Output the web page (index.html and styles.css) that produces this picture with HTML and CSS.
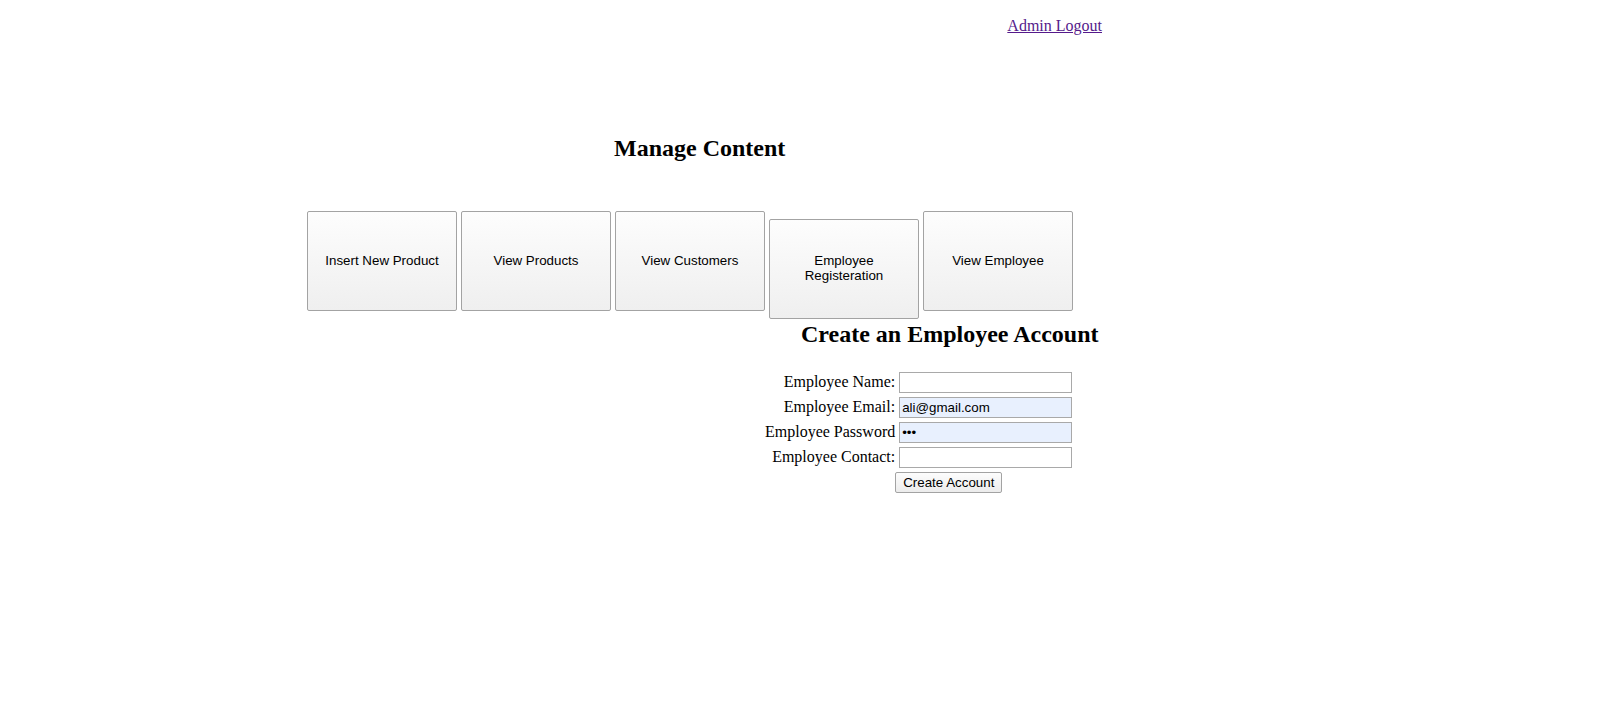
FILE: index.html
```html
<!DOCTYPE html>
<html>
<head>
<meta charset="utf-8">
<title>Admin Panel</title>
<link rel="stylesheet" href="styles.css">
</head>
<body>
<div class="wrap">
  <div class="top"><a href="#" class="logout">Admin Logout</a></div>
  <h2 class="manage">Manage Content</h2>
  <div class="menu">
    <button class="tile">Insert New Product</button>
    <button class="tile">View Products</button>
    <button class="tile">View Customers</button>
    <button class="tile">Employee<br>Registeration</button>
    <button class="tile">View Employee</button>
  </div>
  <h2 class="create">Create an Employee Account</h2>
  <form class="form">
    <table class="ftable">
      <tr><td class="lbl">Employee Name:</td><td><input class="field" type="text"></td></tr>
      <tr><td class="lbl">Employee Email:</td><td><input class="field filled" type="text" value="ali@gmail.com"></td></tr>
      <tr><td class="lbl">Employee Password</td><td><input class="field filled" type="password" value="abc"></td></tr>
      <tr><td class="lbl">Employee Contact:</td><td><input class="field" type="text"></td></tr>
      <tr><td></td><td><button type="button" class="submit">Create Account</button></td></tr>
    </table>
  </form>
</div>
</body>
</html>
```
FILE: styles.css
```css
html, body {
  margin: 0;
  padding: 0;
  background: #fff;
}
body {
  font-family: "Liberation Serif", "Times New Roman", serif;
  font-size: 16px;
  color: #000;
}
.wrap {
  margin-left: 307px;
  width: 795px;
}
.top {
  padding-top: 17px;
  text-align: right;
  line-height: normal;
}
.logout {
  color: #551a8b;
  text-decoration: underline;
}
.manage {
  font-size: 24px;
  font-weight: bold;
  margin: 100px 0 0 0;
  padding-left: 307px;
}
.menu {
  display: flex;
  align-items: baseline;
  gap: 4px;
  margin-top: 49px;
}
.tile {
  width: 150px;
  height: 100px;
  padding: 0 4px 1px;
  border: 1px solid #a3a3a3;
  border-radius: 2px;
  background: linear-gradient(#fdfdfd, #efefef);
  font-family: "Liberation Sans", Arial, sans-serif;
  font-size: 13.333px;
  color: #000;
  text-align: center;
}
.create {
  font-size: 24px;
  font-weight: bold;
  margin: 2px 0 0 0;
  padding-left: 494px;
}
.form {
  margin: 21px 0 0 0;
}
.ftable {
  margin-left: 455px;
  border-spacing: 2px;
}
.ftable td {
  padding: 1px;
}
.lbl {
  text-align: right;
  white-space: nowrap;
}
.field {
  box-sizing: border-box;
  width: 173px;
  height: 21px;
  margin: 0;
  padding: 1px 2px;
  border: 1px solid #a9a9a9;
  font-family: "Liberation Sans", Arial, sans-serif;
  font-size: 13.333px;
  color: #000;
  background: #fff;
  display: block;
}
.filled {
  background: #e8f0fe;
}
.submit {
  margin: 0 0 0 -4px;
  padding: 1px 7px;
  height: 21px;
  border: 1px solid #a3a3a3;
  border-radius: 2px;
  background: linear-gradient(#fdfdfd, #ececec);
  font-family: "Liberation Sans", Arial, sans-serif;
  font-size: 13.333px;
  color: #000;
  display: block;
}
```
